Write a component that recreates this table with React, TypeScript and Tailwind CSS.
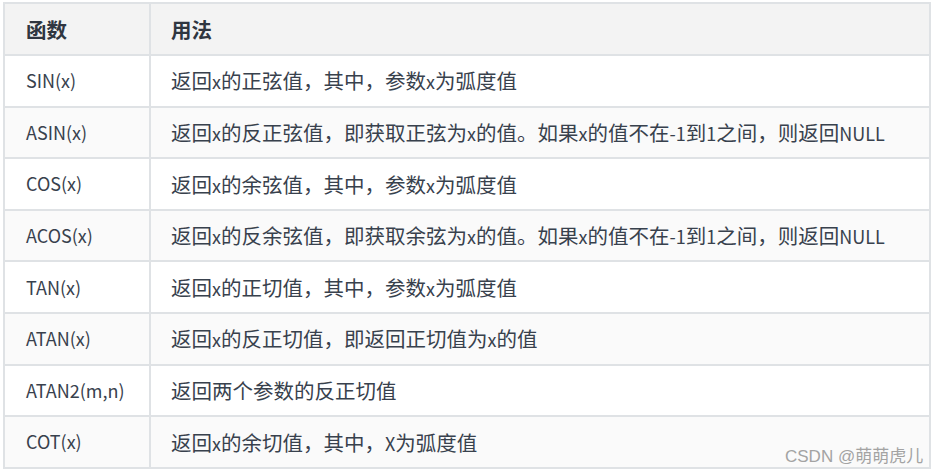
import React from "react";

const rows: [string, string][] = [
  ["SIN(x)", "返回x的正弦值，其中，参数x为弧度值"],
  ["ASIN(x)", "返回x的反正弦值，即获取正弦为x的值。如果x的值不在-1到1之间，则返回NULL"],
  ["COS(x)", "返回x的余弦值，其中，参数x为弧度值"],
  ["ACOS(x)", "返回x的反余弦值，即获取余弦为x的值。如果x的值不在-1到1之间，则返回NULL"],
  ["TAN(x)", "返回x的正切值，其中，参数x为弧度值"],
  ["ATAN(x)", "返回x的反正切值，即返回正切值为x的值"],
  ["ATAN2(m,n)", "返回两个参数的反正切值"],
  ["COT(x)", "返回x的余切值，其中，X为弧度值"],
];

function Mixed({ text }: { text: string }) {
  const parts = text.match(/[\u3000-\u9fff\uff00-\uffef]+|[^\u3000-\u9fff\uff00-\uffef]+/g) || [];
  return (
    <span>
      {parts.map((p, i) =>
        /[\u3000-\u9fff\uff00-\uffef]/.test(p) ? (
          <span key={i} className="text-[20.5px]">
            {p}
          </span>
        ) : (
          <span key={i}>{p}</span>
        )
      )}
    </span>
  );
}

export default function App() {
  return (
    <div
      className="relative w-[937px] h-[475px] bg-white overflow-hidden"
      style={{ fontFamily: '"Noto Sans CJK SC", "Noto Sans", sans-serif' }}
    >
      <div className="ml-[3px] mt-[2px] w-[928px] border-2 border-[#dfe2e5] text-[#38414d] text-[18px]">
        <div className="grid grid-cols-[146px_1fr] h-[50px] bg-[#f3f3f3] font-bold text-[#2f3640]">
          <div className="flex items-center pl-[21px] border-r-2 border-[#dfe2e5]">
            <Mixed text="函数" />
          </div>
          <div className="flex items-center pl-[20px]">
            <Mixed text="用法" />
          </div>
        </div>
        {rows.map(([f, d], i) => (
          <div
            key={f}
            className={`grid grid-cols-[146px_1fr] h-[51.6px] border-t-2 border-[#dfe2e5] ${
              i % 2 === 1 ? "bg-[#fafafa]" : "bg-white"
            }`}
          >
            <div className="flex items-center pl-[21px] border-r-2 border-[#dfe2e5]">{f}</div>
            <div className="flex items-center pl-[20px] whitespace-nowrap">
              <Mixed text={d} />
            </div>
          </div>
        ))}
      </div>
      <div
        className="absolute left-[785px] top-[444px] text-[17px] text-[#a3a3a3] whitespace-nowrap"
        style={{ fontFamily: '"Liberation Sans", "Noto Sans CJK SC", sans-serif' }}
      >
        CSDN @萌萌虎儿
      </div>
    </div>
  );
}
